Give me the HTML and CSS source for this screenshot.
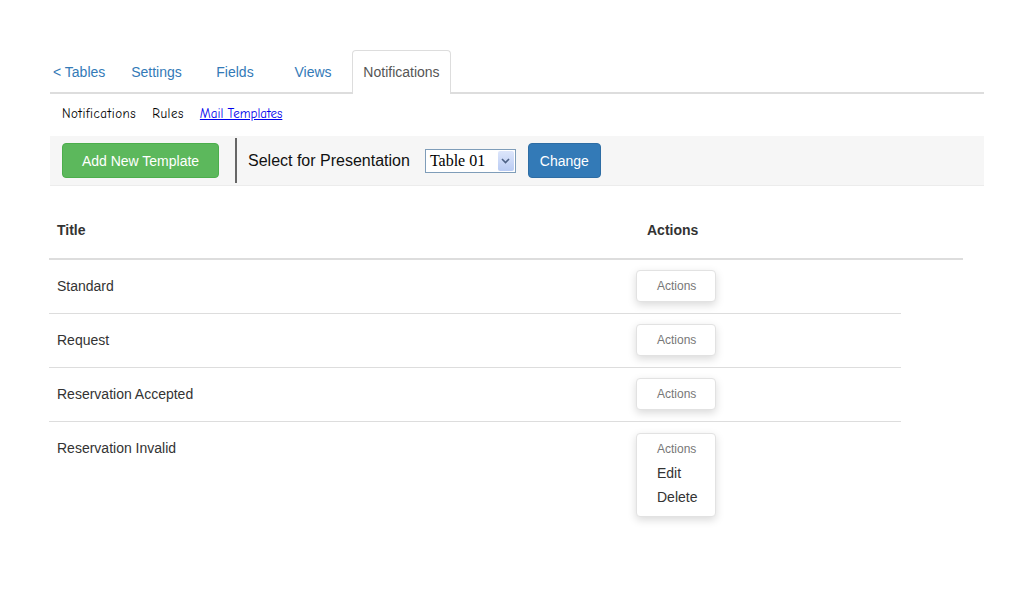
FILE: index.html
```html
<!DOCTYPE html>
<html lang="en">
<head>
    <meta charset="UTF-8">
    <meta name="viewport" content="width=device-width, initial-scale=1.0">
    <title>Mail Templates</title>
    <link rel="stylesheet" href="styles.css">
</head>
<body>

    <div class="page">
        <ul class="tabs">
            <li class="tab tab-back"><a href="#">&lt; Tables</a></li>
            <li class="tab tab-wide"><a href="#">Settings</a></li>
            <li class="tab"><a href="#">Fields</a></li>
            <li class="tab"><a href="#">Views</a></li>
            <li class="tab active"><a href="#">Notifications</a></li>
        </ul>

        <div class="subnav">
            <span>Notifications</span>
            <span>Rules</span>
            <a href="#">Mail Templates</a>
        </div>

        <div class="toolbar">
            <button class="btn btn-green">Add New Template</button>
            <div class="divider"></div>
            <label class="select-label">Select for Presentation</label>
            <div class="select-box">
                <span>Table 01</span>
                <span class="select-arrow">
                    <svg width="9" height="6" viewBox="0 0 9 6"><path d="M1 1 L4.5 4.5 L8 1" fill="none" stroke="#4d6185" stroke-width="1.6"/></svg>
                </span>
            </div>
            <button class="btn btn-blue">Change</button>
        </div>

        <div class="table-head">
            <div class="col-title">Title</div>
            <div class="col-actions">Actions</div>
        </div>

        <div class="table-body">
            <div class="row">
                <div class="cell-title">Standard</div>
                <div class="cell-actions"><div class="actions-btn">Actions</div></div>
            </div>
            <div class="row">
                <div class="cell-title">Request</div>
                <div class="cell-actions"><div class="actions-btn">Actions</div></div>
            </div>
            <div class="row">
                <div class="cell-title">Reservation Accepted</div>
                <div class="cell-actions"><div class="actions-btn">Actions</div></div>
            </div>
            <div class="row last">
                <div class="cell-title">Reservation Invalid</div>
                <div class="cell-actions">
                    <div class="actions-btn open">
                        <div class="menu-label">Actions</div>
                        <a href="#" class="menu-item">Edit</a>
                        <a href="#" class="menu-item">Delete</a>
                    </div>
                </div>
            </div>
        </div>
    </div>

</body>
</html>
```

FILE: styles.css
```css
body {
    margin: 0;
    font-family: "Liberation Sans", Arial, sans-serif;
    font-size: 14px;
    color: #333;
    background-color: #ffffff;
}

.page {
    padding: 50px 32px 40px 50px;
}

/* tabs */
.tabs {
    display: flex;
    list-style: none;
    margin: 0;
    padding: 0;
    border-bottom: 2px solid #ddd;
    height: 42px;
}

.tab {
    width: 78px;
    text-align: center;
}

.tab-wide {
    width: 79px;
}

.tab a {
    display: block;
    line-height: 20px;
    padding: 12px 0 10px;
    color: #337ab7;
    text-decoration: none;
}

.tab-back {
    width: 67px;
    text-align: left;
}

.tab-back a {
    padding-left: 3px;
}

.tab.active {
    width: 97px;
    border: 1px solid #ddd;
    border-bottom: none;
    border-radius: 4px 4px 0 0;
    background-color: #fff;
    height: 43px;
}

.tab.active a {
    color: #555;
    padding-top: 11px;
}

/* sub navigation */
.subnav {
    display: flex;
    gap: 16px;
    padding: 11px 0 0 12px;
    height: 30px;
    box-sizing: border-box;
    font-family: "Comic Sans MS", "Comic Neue", cursive;
    font-size: 13px;
    letter-spacing: 0.5px;
    color: #000;
    line-height: 18px;
}

.subnav a {
    color: #0000ee;
    letter-spacing: 0;
}

/* toolbar */
.toolbar {
    display: flex;
    align-items: center;
    height: 49px;
    background-color: #f6f6f6;
    border-bottom: 1px solid #ececec;
    padding-left: 12px;
    margin-top: 12px;
}

.btn {
    font-family: "Liberation Sans", Arial, sans-serif;
    font-size: 14px;
    color: #fff;
    border: 1px solid transparent;
    border-radius: 4px;
    height: 35px;
    cursor: pointer;
}

.btn-green {
    width: 157px;
    background-color: #5cb85c;
    border-color: #4cae4c;
}

.btn-blue {
    width: 73px;
    background-color: #337ab7;
    border-color: #2e6da4;
}

.divider {
    width: 2px;
    height: 45px;
    background-color: #666;
    margin: 0 11px 0 16px;
}

.select-label {
    font-size: 16px;
    color: #111;
}

.select-box {
    display: flex;
    align-items: center;
    justify-content: space-between;
    width: 85px;
    height: 22px;
    margin: 0 12px 0 15px;
    border: 1px solid #7f9db9;
    background-color: #fff;
    font-family: "Liberation Serif", "Times New Roman", serif;
    font-size: 16px;
    color: #000;
    padding-left: 4px;
}

.select-arrow {
    display: flex;
    align-items: center;
    justify-content: center;
    width: 16px;
    height: 20px;
    margin-right: 1px;
    background: linear-gradient(#dde6fb, #b9cbf3);
    border-radius: 2px;
}

/* table */
.table-head {
    display: flex;
    width: 914px;
    margin-left: -1px;
    border-bottom: 2px solid #ddd;
    font-weight: bold;
    line-height: 20px;
}

.col-title {
    width: 574px;
    padding: 34px 8px 18px 8px;
}

.col-actions {
    padding: 34px 8px 18px;
}

.table-body {
    width: 852px;
    margin-left: -1px;
}

.row {
    display: flex;
    border-bottom: 1px solid #ddd;
    height: 53px;
}

.row.last {
    border-bottom: none;
    height: auto;
}

.cell-title {
    width: 563px;
    padding: 16px 8px 0;
    line-height: 20px;
}

.cell-actions {
    padding: 10px 8px 0;
}

.actions-btn {
    width: 57px;
    padding: 7px 1px 7px 20px;
    border: 1px solid #e2e2e2;
    border-radius: 4px;
    background-color: #fff;
    box-shadow: 0 3px 8px rgba(0, 0, 0, 0.15);
    font-size: 12px;
    color: #777;
    line-height: 16px;
}

.actions-btn.open {
    margin-top: 1px;
}

.menu-label {
    margin-bottom: 4px;
}

.menu-item {
    display: block;
    font-size: 14px;
    color: #333;
    text-decoration: none;
    line-height: 24px;
}
```
